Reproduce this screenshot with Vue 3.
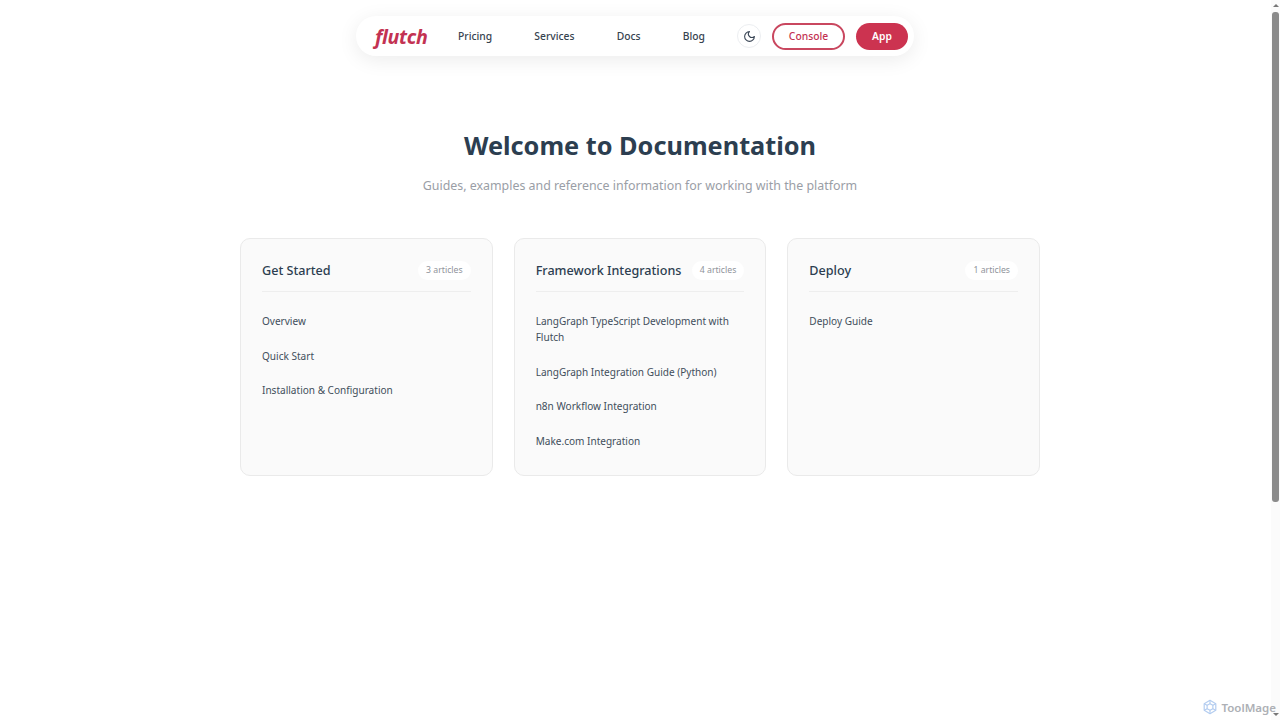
<template>
  <div class="page">
    <div class="nav-wrap">
      <nav class="nav">
        <span class="logo">flutch</span>
        <div class="links">
          <a v-for="link in links" :key="link" class="link">{{ link }}</a>
        </div>
        <button class="theme">
          <svg width="13" height="13" viewBox="0 0 24 24" fill="none" stroke="#3a4656" stroke-width="2" stroke-linecap="round" stroke-linejoin="round">
            <path d="M12 3a6 6 0 0 0 9 9 9 9 0 1 1-9-9Z" />
          </svg>
        </button>
        <button class="console">Console</button>
        <button class="app">App</button>
      </nav>
    </div>

    <header class="hero">
      <h1>Welcome to Documentation</h1>
      <p>Guides, examples and reference information for working with the platform</p>
    </header>

    <section class="cards">
      <div v-for="card in cards" :key="card.title" class="card">
        <div class="card-head">
          <h2>{{ card.title }}</h2>
          <span class="count">{{ card.items.length }} articles</span>
        </div>
        <ul>
          <li v-for="item in card.items" :key="item">{{ item }}</li>
        </ul>
      </div>
    </section>

    <!-- screenshot overlay: scrollbar and watermark -->
    <div class="scrollbar">
      <span class="arrow-up"></span>
      <span class="thumb"></span>
      <span class="arrow-down"></span>
    </div>
    <div class="watermark">
      <svg width="16" height="16" viewBox="0 0 24 24" fill="none" stroke="#b4cdf0" stroke-width="1.8" stroke-linejoin="round">
        <path d="M12 2l8.7 5v10L12 22l-8.7-5V7z" />
        <path d="M12 7l4.3 2.5v5L12 17l-4.3-2.5v-5z" />
        <path d="M12 2v5M20.7 7l-4.4 2.5M20.7 17l-4.4-2.5M12 22v-5M3.3 17l4.4-2.5M3.3 7l4.4 2.5" />
      </svg>
      <span>ToolMage</span>
    </div>
  </div>
</template>

<script setup>
const links = ['Pricing', 'Services', 'Docs', 'Blog'];

const cards = [
  {
    title: 'Get Started',
    items: ['Overview', 'Quick Start', 'Installation & Configuration'],
  },
  {
    title: 'Framework Integrations',
    items: [
      'LangGraph TypeScript Development with Flutch',
      'LangGraph Integration Guide (Python)',
      'n8n Workflow Integration',
      'Make.com Integration',
    ],
  },
  {
    title: 'Deploy',
    items: ['Deploy Guide'],
  },
];
</script>

<style>
html, body {
  margin: 0;
  height: 100%;
  overflow: hidden;
  background: #fff;
}
</style>

<style scoped>
.page {
  position: relative;
  height: 720px;
  overflow: hidden;
  background: #fff;
  font-family: "Noto Sans", "Open Sans", sans-serif;
  color: #2c3e50;
}

.nav-wrap {
  display: flex;
  justify-content: center;
  padding: 16px 10px 0 0;
}

.nav {
  display: flex;
  align-items: center;
  width: 558px;
  height: 40px;
  box-sizing: border-box;
  padding: 0 6px 0 18px;
  background: #fff;
  border-radius: 20px;
  box-shadow: 0 4px 20px rgba(0, 0, 0, 0.08);
}

.logo {
  width: 52px;
  margin-left: 1px;
  font-size: 19.6px;
  font-weight: 700;
  font-style: italic;
  color: #c33252;
  letter-spacing: -0.3px;
}

.links {
  display: flex;
  width: 247px;
  justify-content: space-between;
  margin-left: 31px;
  padding-bottom: 1px;
}

.link {
  font-size: 10.3px;
  font-weight: 500;
  color: #36434f;
}

button {
  font-family: inherit;
  cursor: pointer;
}

.theme {
  display: flex;
  align-items: center;
  justify-content: center;
  flex: none;
  width: 24px;
  height: 24px;
  padding: 0;
  margin-left: 32px;
  background: #fff;
  border: 1px solid #eceef1;
  border-radius: 50%;
}

.console {
  flex: none;
  width: 73px;
  height: 27px;
  margin-left: 11px;
  padding: 0 0 1px;
  font-size: 10.3px;
  font-weight: 500;
  color: #c33252;
  background: #fff;
  border: 2px solid #c9475f;
  border-radius: 14px;
}

.app {
  flex: none;
  width: 52px;
  height: 27px;
  margin-left: 11px;
  padding: 0 0 1px;
  font-size: 10.3px;
  font-weight: 600;
  color: #fff;
  background: #cc3350;
  border: none;
  border-radius: 14px;
}

.hero {
  margin-top: 71px;
  text-align: center;
}

.hero h1 {
  margin: 0;
  font-size: 25.3px;
  line-height: 36px;
  font-weight: 700;
  color: #2c3e50;
}

.hero p {
  margin: 14px 0 0;
  font-size: 12.4px;
  line-height: 18px;
  color: #9a9ea6;
}

.cards {
  display: grid;
  grid-template-columns: repeat(3, 1fr);
  gap: 21px;
  width: 800px;
  margin: 43px auto 0;
}

.card {
  height: 238px;
  box-sizing: border-box;
  padding: 21px;
  background: #fafafa;
  border: 1px solid #eaeaea;
  border-radius: 10px;
}

.card-head {
  display: flex;
  align-items: center;
  justify-content: space-between;
  height: 20px;
  padding-bottom: 11px;
  border-bottom: 1px solid #eeeeee;
}

.card-head h2 {
  margin: 0;
  font-size: 12.6px;
  font-weight: 500;
  white-space: nowrap;
  color: #2c3e50;
}

.count {
  padding: 3px 8px;
  font-size: 8.7px;
  line-height: 13px;
  white-space: nowrap;
  color: #8f939a;
  background: #fff;
  border-radius: 10px;
}

ul {
  list-style: none;
  margin: 21px 0 0;
  padding: 0;
}

li {
  margin-bottom: 18.5px;
  font-size: 10.05px;
  line-height: 16px;
  color: #414e5b;
}

.scrollbar {
  position: absolute;
  top: 0;
  right: 0;
  display: flex;
  flex-direction: column;
  align-items: center;
  width: 9px;
  height: 720px;
  background: #fbfbfb;
}

.arrow-up {
  width: 0;
  height: 0;
  margin-top: 4px;
  border: 3px solid transparent;
  border-top: 0;
  border-bottom: 3px solid #777;
}

.thumb {
  width: 7px;
  height: 490px;
  margin-top: 5px;
  background: #8b8b8b;
  border-radius: 3px;
}

.arrow-down {
  width: 0;
  height: 0;
  margin-top: auto;
  margin-bottom: 4px;
  border: 3px solid transparent;
  border-bottom: 0;
  border-top: 3px solid #777;
}

.watermark {
  position: absolute;
  right: 4px;
  bottom: 5px;
  display: flex;
  align-items: center;
  gap: 3px;
  font-size: 11.5px;
  font-weight: 600;
  color: #adb0b5;
}
</style>
